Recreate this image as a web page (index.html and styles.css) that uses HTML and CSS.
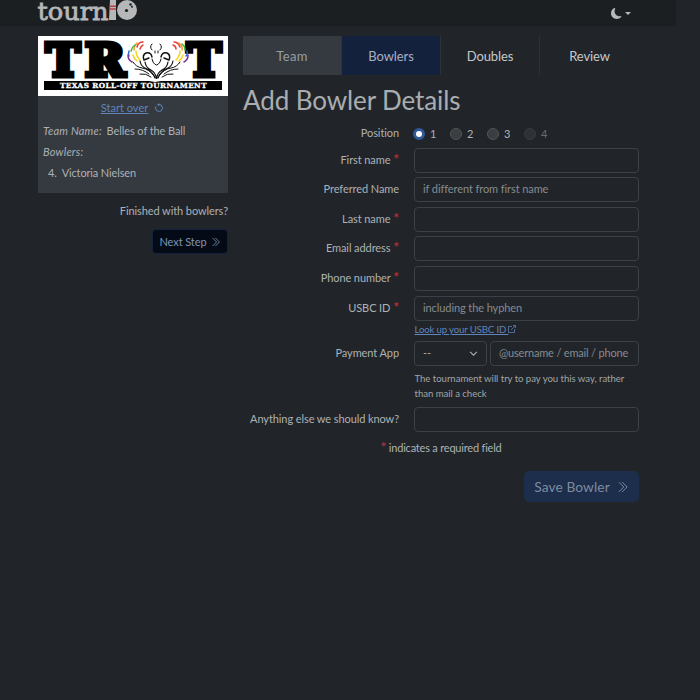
FILE: index.html
```html
<!DOCTYPE html>
<html lang="en">
<head>
<meta charset="utf-8">
<title>Tournio</title>
<link rel="stylesheet" href="styles.css">
</head>
<body>
<header class="navbar">
  <svg class="brand" width="101" height="25" viewBox="37 0 101 25">
    <text class="brand-text" x="37.500" y="19.500" textLength="71" lengthAdjust="spacingAndGlyphs">tourn</text>
    <path fill="#b5b7b8" d="M110 0h6v20h-7z"/><path fill="#b74143" d="M109.500 5.500h6.500v1.500h-6.500zM109.500 8.300h6.500v1.500h-6.500z"/>
    <circle cx="127" cy="10" r="10" fill="#b5b7b8"/>
    <circle cx="126.500" cy="10.500" r="1.600" fill="#1b1f21"/><circle cx="130.500" cy="4.500" r="1.200" fill="#1b1f21"/><circle cx="132" cy="6.800" r="1" fill="#1b1f21"/>
  </svg>
  <div class="theme">
    <svg width="11" height="11" viewBox="0 0 16 16"><path fill="#b5b9bd" d="M6 .278a.77.77 0 0 1 .08.858 7.200 7.200 0 0 0-.878 3.460c0 4.021 3.278 7.277 7.318 7.277q.792-.001 1.533-.16a.79.790 0 0 1 .81.316.73.730 0 0 1-.031.893A8.350 8.350 0 0 1 8.344 16C3.734 16 0 12.286 0 7.710 0 4.266 2.114 1.312 5.124.060A.75.750 0 0 1 6 .278"/></svg>
    <i class="caret"></i>
  </div>
</header>
<main class="layout">
  <aside class="side">
    <svg class="banner" width="190" height="60" viewBox="38 36 190 60">
      <path fill="#fff" d="M38 36h190v60H38z"/>
      <g class="banner-big">
        <text x="46" y="76" textLength="34" lengthAdjust="spacingAndGlyphs">T</text>
        <text x="85" y="76" textLength="40" lengthAdjust="spacingAndGlyphs">R</text>
        <text x="187" y="76" textLength="34" lengthAdjust="spacingAndGlyphs">T</text>
      </g>
      <path d="M44 81h105l6 1 6-1h61v9H44z"/>
      <text class="banner-small" x="60" y="88" textLength="147" lengthAdjust="spacingAndGlyphs">TEXAS ROLL-OFF TOURNAMENT</text>
      <g fill="none" stroke-width="1.500" stroke-linecap="round">
        <path stroke="#e5423a" d="M137 47q1-5 6-5M174 42q4 0 6 5M140 49q1-3 3-4M173 45q3 1 3 4"/>
        <path stroke="#f29b25" d="M134 50q0-4 3-7M179 43q4 3 3 7"/>
        <path stroke="#f5d41f" d="M136 51q0 5 4 9M180 51q0 5-4 9M133 55q1 4 4 6M183 55q-1 4-4 6"/>
        <path stroke="#39b54a" d="M131 51q1-4 4-6M182 44q3 2 3 6"/>
        <path stroke="#2d6bd2" d="M129 51q-1 3 0 5M187 51q1 3-1 5"/>
        <path stroke="#7a3298" d="M128 55q0 5 4 7M188 55q0 5-4 7"/>
      </g>
      <g fill="none" stroke="#111" stroke-linecap="round" stroke-width="1">
        <path d="M152 44q-3 3 0 6M160 44q3 3 0 6M155 51v2M158 51v2M152 59q1 5 4.500 6 3.500-1 4.500-6"/>
        <path stroke-width="1.400" d="M152 57q-1-5-6-4-4 2-2 7l5-2M161 57q1-5 6-4 4 2 2 7l-5-2"/>
        <path stroke-width="1.200" d="M145 62q1 6 6 8 5 3 5.500 9 .5-6 5.500-9 5-2 6-8M140 61q1 6 7 8 6 3 8 9M173 61q-1 6-7 8-6 3-8 9"/>
        <path d="M133 62q3 5 9 6 7 1 12 8M180 62q-3 5-9 6-7 1-12 8M135 69q8 0 14 5M178 69q-8 0-14 5M140 74q6-1 11 3M173 74q-6-1-11 3"/>
      </g>
    </svg>
    <div class="team-card">
      <div class="restart"><a class="link">Start over</a>
        <svg width="10" height="10" viewBox="0 0 16 16" fill="#6184b9"><path stroke="#6184b9" stroke-width=".5" d="M8 3a5 5 0 1 1-4.546 2.914.5.5 0 0 0-.908-.417A6 6 0 1 0 8 2z"/><path d="M8 4.466V.534a.25.25 0 0 0-.41-.192L5.230 2.308a.25.250 0 0 0 0 .384l2.360 1.966A.25.250 0 0 0 8 4.466"/></svg>
      </div>
      <div class="team-line"><em>Team Name:</em> <span>Belles of the Ball</span></div>
      <div class="team-line"><em>Bowlers:</em></div>
      <div class="team-line bowler"><span>4.</span><span>Victoria Nielsen</span></div>
    </div>
    <div class="finished">Finished with bowlers?</div>
    <button class="next">Next Step <svg width="10" height="10" viewBox="0 0 16 16"><path d="M2.500 1.500 9 8l-6.500 6.500M7 1.500 13.500 8 7 14.500"/></svg></button>
  </aside>
  <section class="content">
    <nav class="tabs"><div class="tab team">Team</div><div class="tab active">Bowlers</div><div class="tab">Doubles</div><div class="tab last">Review</div></nav>
    <h1>Add Bowler Details</h1>
    <form class="form">
      <div class="row radios"><label>Position</label><div class="choices"><span class="choice"><i class="radio on"></i>1</span><span class="choice"><i class="radio"></i>2</span><span class="choice"><i class="radio"></i>3</span><span class="choice off"><i class="radio"></i>4</span></div></div>
      <div class="row"><label>First name <b>*</b></label><div class="field"></div></div>
      <div class="row"><label>Preferred Name</label><div class="field">if different from first name</div></div>
      <div class="row"><label>Last name <b>*</b></label><div class="field"></div></div>
      <div class="row"><label>Email address <b>*</b></label><div class="field"></div></div>
      <div class="row"><label>Phone number <b>*</b></label><div class="field"></div></div>
      <div class="row usbc"><label>USBC ID <b>*</b></label><div class="field">including the hyphen</div></div>
      <div class="lookup"><a class="link">Look up your USBC ID <svg width="8" height="8" viewBox="0 0 16 16"><path d="M8 3H1v12h12V8M10 1h5v5M15 1 6 10"/></svg></a></div>
      <div class="row pay"><label>Payment App</label><div class="pair"><div class="field select">--<svg width="9" height="9" viewBox="0 0 16 16"><path d="m2 5 6 6 6-6"/></svg></div><div class="field app">@username / email / phone</div></div></div>
      <div class="help">The tournament will try to pay you this way, rather<br>than mail a check</div>
      <div class="row"><label>Anything else we should know?</label><div class="field"></div></div>
      <div class="required"><b>*</b> indicates a required field</div>
      <div class="actions"><button type="button" class="save">Save Bowler <svg width="12" height="12" viewBox="0 0 16 16"><path d="M2.500 1.500 9 8l-6.500 6.500M7 1.500 13.500 8 7 14.500"/></svg></button></div>
    </form>
  </section>
</main>
</body>
</html>
```
FILE: styles.css
```css
* { box-sizing: border-box; }
body { margin: 0; height: 700px; overflow: hidden; background: #212529; color: #adb1b5; font: 11px/20px Lato, sans-serif; letter-spacing: -.09px; }
svg { display: block; flex: none; overflow: visible; }
button { font: inherit; letter-spacing: inherit; }
.navbar { width: 676px; height: 26px; padding: 0 45px 0 37px; background: #1b1f21; display: flex; justify-content: space-between; }
.brand-text { font: 400 25px "DejaVu Serif", serif; fill: #b5b7b8; stroke: #b5b7b8; stroke-width: .8; letter-spacing: 0; }
.theme { display: flex; gap: 3px; padding-top: 8px; }
.caret { margin-top: 4px; width: 6px; height: 3px; background: #b5b9bd; clip-path: polygon(0 0, 100% 0, 50% 100%); }
.layout { display: flex; gap: 15px; padding: 10px 0 0 38px; }
.side { width: 190px; }
.banner-big { font: 700 44px "DejaVu Serif", serif; stroke: #000; stroke-width: 5; letter-spacing: 0; }
.banner-small { font: 700 7px "DejaVu Serif", serif; fill: #fff; stroke: #fff; stroke-width: .3; letter-spacing: .4px; }
.team-card { height: 97px; background: #343a40; padding: 2px 6px 2px 5px; }
.restart { display: flex; justify-content: center; align-items: center; gap: 6px; height: 20px; letter-spacing: .02px; }
.link { color: #6184b9; text-decoration: underline; }
.team-line { height: 20.600px; line-height: 25px; }
.team-line em { margin-right: 2px; letter-spacing: .2px; }
.bowler { display: flex; gap: 5px; padding: 1px 0 0 5px; letter-spacing: -.14px; }
.finished { margin-top: 8px; text-align: right; }
.next { margin: 8px 0 0 auto; width: 76px; height: 25px; display: flex; align-items: center; justify-content: center; gap: 4px; background: #040b16; border: 1px solid #14233d; border-radius: 4px; color: #8095b4; padding: 0; }
.next svg, .save svg { fill: none; stroke: currentColor; stroke-width: 1.300; }
.content { width: 396px; }
.tabs { display: flex; height: 39px; }
.tab { width: 99px; border-right: 1px solid #2d3237; text-align: center; font-size: 13px; line-height: 40px; color: #c5c8cb; }
.tab.team { background: #343a40; color: #989ea4; letter-spacing: .3px; }
.tab.active { background: #14213d; color: #a6b0c4; }
.tab.last { border: 0; }
h1 { margin: 8px 0 8px; font-size: 26px; line-height: 34px; font-weight: 400; letter-spacing: -.1px; color: #a9adb1; }
.row { display: grid; grid-template-columns: 156px 225px; column-gap: 15px; height: 29.600px; }
.row label { text-align: right; line-height: 24px; white-space: nowrap; }
b { color: #a8323e; font-weight: 700; font-size: 14px; line-height: 10px; }
.field { height: 25px; border: 1px solid #3b4147; border-radius: 4px; padding: 0 8px; line-height: 22px; color: #868b90; white-space: nowrap; }
.radios { height: 22.500px; }
.radios label { line-height: 16px; }
.choices { display: flex; gap: 14px; height: 17px; padding-top: 1px; margin-left: -1px; }
.choice { display: flex; align-items: center; gap: 5px; line-height: 16px; width: 23px; }
.radio { flex: none; width: 12px; height: 12px; border: 1px solid #505457; border-radius: 50%; background: #3b3e41; }
.radio.on { border: 3px solid #30599a; background: #fff; }
.off { opacity: .5; }
.usbc { height: 26px; margin-top: .5px; }
.lookup { height: 19px; padding-left: 171.500px; font-size: 9.600px; line-height: 15px; letter-spacing: -.14px; }
.lookup svg { display: inline; fill: none; stroke: #6184b9; stroke-width: 1.500; }
.pair { display: flex; gap: 3px; }
.select { width: 73px; display: flex; justify-content: space-between; align-items: center; color: #a9adb1; }
.select svg { fill: none; stroke: #a9adb1; stroke-width: 2; }
.app { width: 149px; letter-spacing: -.18px; }
.help { margin: .5px 0 5.500px 171.500px; font-size: 9.600px; line-height: 15px; letter-spacing: -.04px; color: #a0a4a8; white-space: nowrap; }
.required { margin-top: 2px; text-align: center; letter-spacing: -.2px; }
.actions { display: flex; justify-content: flex-end; margin-top: 13px; }
.save { width: 115px; height: 31px; display: flex; align-items: center; justify-content: center; gap: 7px; background: #1c2e4b; border: 0; border-radius: 5px; color: #7e8a9d; font-size: 13.700px; letter-spacing: .12px; padding: 0; }
```
